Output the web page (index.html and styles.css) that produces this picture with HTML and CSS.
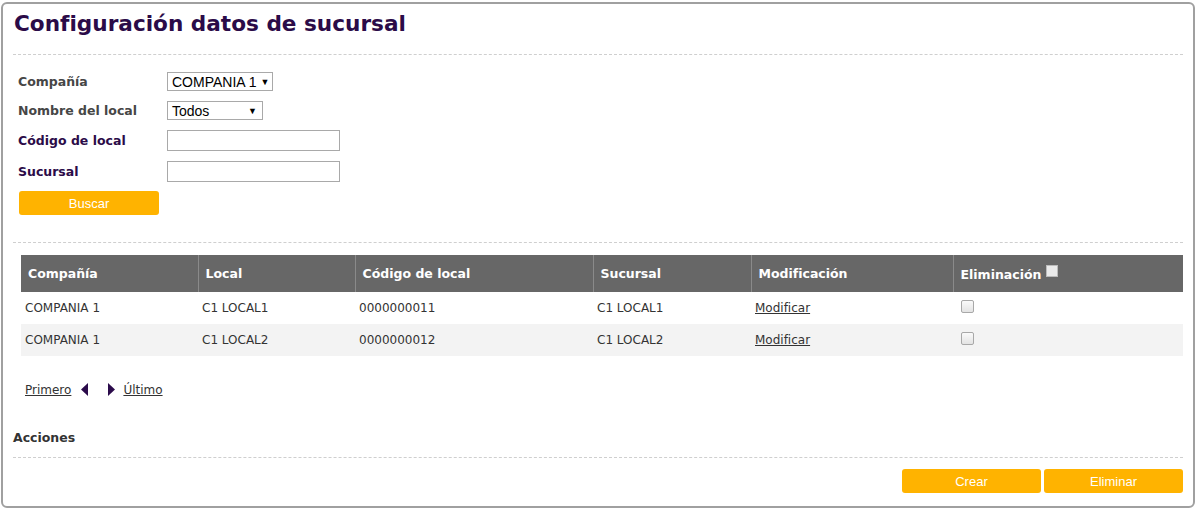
FILE: index.html
```html
<!DOCTYPE html>
<html lang="es">
<head>
<meta charset="utf-8">
<title>Configuración datos de sucursal</title>
<link rel="stylesheet" href="styles.css">
</head>
<body>
<div class="panel">
  <h1 class="title">Configuración datos de sucursal</h1>
  <hr class="sep">
  <div class="form">
    <div class="row"><span class="label gray">Compañía</span>
      <div class="select sel-company"><span>COMPANIA 1</span><span class="arrow">▼</span></div></div>
    <div class="row"><span class="label gray">Nombre del local</span>
      <div class="select sel-local"><span>Todos</span><span class="arrow">▼</span></div></div>
    <div class="row"><span class="label purple">Código de local</span><input class="text" type="text"></div>
    <div class="row"><span class="label purple">Sucursal</span><input class="text" type="text"></div>
    <button class="btn btn-search">Buscar</button>
  </div>
  <hr class="sep sep2">
  <table class="grid">
    <colgroup>
      <col style="width:177px"><col style="width:157px"><col style="width:238px"><col style="width:158px"><col style="width:202px"><col>
    </colgroup>
    <thead>
      <tr><th>Compañía</th><th>Local</th><th>Código de local</th><th>Sucursal</th><th>Modificación</th><th>Eliminación <span class="hcheck"></span></th></tr>
    </thead>
    <tbody>
      <tr><td>COMPANIA 1</td><td>C1 LOCAL1</td><td>0000000011</td><td>C1 LOCAL1</td><td><a href="#">Modificar</a></td><td><span class="check"></span></td></tr>
      <tr class="alt"><td>COMPANIA 1</td><td>C1 LOCAL2</td><td>0000000012</td><td>C1 LOCAL2</td><td><a href="#">Modificar</a></td><td><span class="check"></span></td></tr>
    </tbody>
  </table>
  <div class="pager">
    <a href="#">Primero</a>
    <svg class="tri" width="8" height="13" viewBox="0 0 8 13"><path d="M7 0 L7 13 L0 6.5 Z" fill="#2b0b4b"/></svg>
    <svg class="tri tri-r" width="8" height="13" viewBox="0 0 8 13"><path d="M1 0 L1 13 L8 6.5 Z" fill="#2b0b4b"/></svg>
    <a href="#">Último</a>
  </div>
  <div class="actions-title">Acciones</div>
  <hr class="sep sep3">
  <div class="actions">
    <button class="btn btn-act">Crear</button>
    <button class="btn btn-act">Eliminar</button>
  </div>
</div>
</body>
</html>
```
FILE: styles.css
```css
html, body { margin: 0; padding: 0; background: #fff; }
body { font-family: "DejaVu Sans", Verdana, sans-serif; color: #333; }
.panel {
  margin: 2px 3px 0 1px;
  height: 506px;
  border: 2px solid #a0a0a0;
  border-radius: 6px;
  box-sizing: border-box;
  padding: 0 10px 0 10px;
}
.title {
  margin: 0;
  padding: 7px 0 0 1px;
  font-size: 21.6px;
  line-height: 26px;
  font-weight: bold;
  color: #2b0b48;
  height: 42px;
  box-sizing: border-box;
  white-space: nowrap;
}
.sep { border: 0; border-top: 1px dashed #cfcfcf; margin: 8px 0 0 0; height: 0; }
.form { padding: 12px 0 0 5px; display: flex; flex-direction: column; }
.row { display: flex; align-items: center; height: 29px; }
.row:nth-child(3), .row:nth-child(4) { height: 31px; }
.label { width: 149px; font-weight: bold; font-size: 12.5px; }
.label.gray { color: #464646; }
.label.purple { color: #2b0b48; }
.select {
  display: flex; align-items: center; justify-content: space-between;
  height: 19px; box-sizing: border-box; border: 1px solid #a9a9a9;
  font-family: "Liberation Sans", Arial, sans-serif; font-size: 14px; color: #000;
  padding: 0 5px 0 4px; white-space: nowrap;
}
.select .arrow { font-size: 9px; margin-left: 4px; flex-shrink: 0; }
.sel-company { width: 106px; }
.sel-local { width: 96px; }
.text { width: 173px; height: 21px; box-sizing: border-box; border: 1px solid #a9a9a9; padding: 0; margin: 0; }
.btn {
  border: 0; border-radius: 3px; background: #ffb300; color: #fff;
  font-family: "Liberation Sans", Arial, sans-serif; font-size: 13px;
  height: 24px; padding: 0; cursor: pointer;
}
.btn-search { width: 140px; margin-top: 4px; margin-left: 1px; }
.sep2 { margin-top: 27px; }
.grid {
  margin: 12px 0 0 8px;
  width: 1162px;
  border-collapse: collapse;
  table-layout: fixed;
  font-size: 12px;
}
.grid th {
  background: #676767; color: #fff; text-align: left; font-weight: bold;
  height: 37px; padding: 0 7px; border-left: 1px solid #8a8a8a; font-size: 12.5px;
  box-sizing: border-box;
}
.grid th:first-child { border-left: 0; }
.grid td { height: 32px; padding: 0 4px; color: #333; box-sizing: border-box; }
.grid tr.alt td { background: #f3f3f3; }
.grid td a { color: #333; text-decoration: underline; }
.hcheck {
  display: inline-block; width: 10px; height: 10px; background: #eaeaea;
  border: 1px solid #bbb; vertical-align: 2px;
}
.check {
  display: inline-block; width: 11px; height: 11px; border: 1px solid #a8a8a8;
  border-radius: 2px; background: linear-gradient(#fafafa, #e3e3e3); margin-left: 4px;
}
.pager { display: flex; align-items: center; padding: 25px 0 0 12px; font-size: 12px; height: 17px; }
.pager a { color: #333; }
.pager .tri { margin-left: 10px; }
.pager .tri-r { margin-left: 18px; margin-right: 8px; }
.actions-title { font-weight: bold; font-size: 12.5px; margin-top: 32px; color: #333; }
.sep3 { margin-top: 12px; }
.actions { display: flex; justify-content: flex-end; gap: 3px; padding: 11px 0 0 0; }
.btn-act { width: 139px; }
```
